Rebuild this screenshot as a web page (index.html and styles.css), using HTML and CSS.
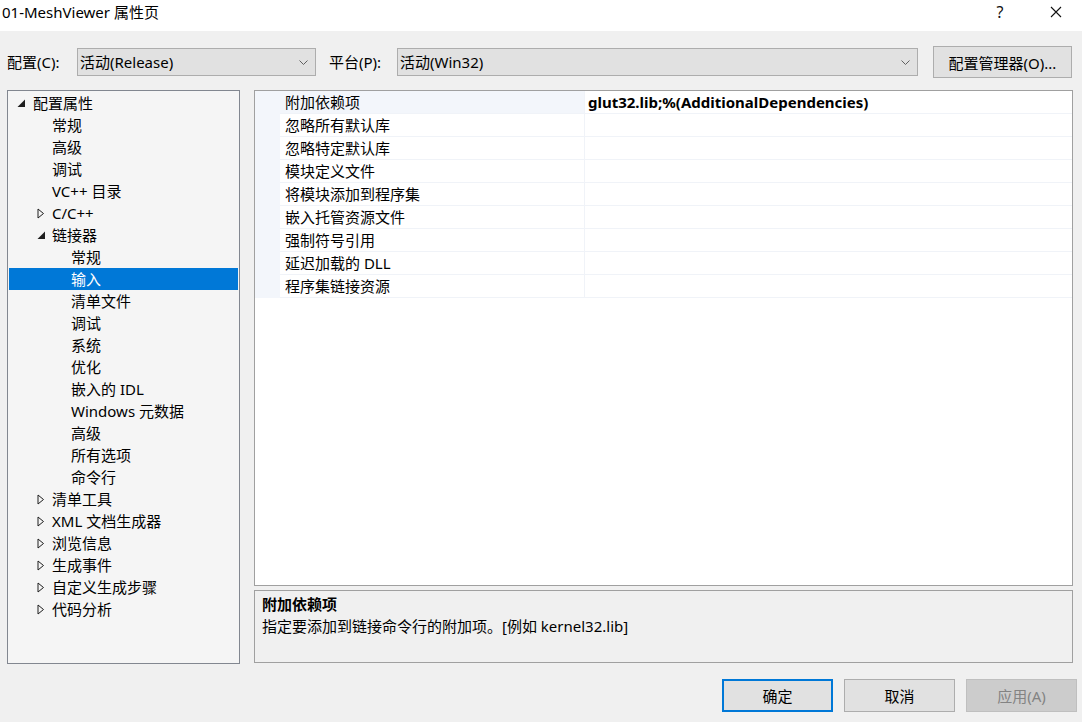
FILE: index.html
```html
<!DOCTYPE html>
<html lang="zh-CN">
<head>
<meta charset="utf-8">
<title>01-MeshViewer 属性页</title>
<link rel="stylesheet" href="styles.css">
</head>
<body>
<div class="window">
  <div class="titlebar">
    <div class="title">01-MeshViewer 属性页</div>
    <div class="winctl">
      <span class="help">?</span>
      <span class="close"><svg width="12" height="12" viewBox="0 0 12 12"><path d="M1 1 L11 11 M11 1 L1 11" stroke="#111" stroke-width="1.1" fill="none"/></svg></span>
    </div>
  </div>

  <div class="toolbar">
    <label class="lbl lbl-config">配置(C):</label>
    <div class="combo combo-config"><span>活动(Release)</span><svg class="chev" width="9" height="5" viewBox="0 0 9 5"><path d="M0.5 0.5 L4.5 4.5 L8.5 0.5" stroke="#606060" fill="none"/></svg></div>
    <label class="lbl lbl-platform">平台(P):</label>
    <div class="combo combo-platform"><span>活动(Win32)</span><svg class="chev" width="9" height="5" viewBox="0 0 9 5"><path d="M0.5 0.5 L4.5 4.5 L8.5 0.5" stroke="#606060" fill="none"/></svg></div>
    <button class="btn btn-mgr">配置管理器(O)...</button>
  </div>

  <div class="main">
    <div class="tree">
      <div class="node l0"><span class="exp"><svg width="9" height="9" viewBox="0 0 9 9"><polygon points="8,0.5 8,8 0.5,8" fill="#1e1e1e"/></svg></span>配置属性</div>
      <div class="node l1n">常规</div>
      <div class="node l1n">高级</div>
      <div class="node l1n">调试</div>
      <div class="node l1n">VC++ 目录</div>
      <div class="node l1"><span class="exp"><svg width="8" height="11" viewBox="0 0 8 11"><polygon points="1,1 6.5,5.5 1,10" fill="none" stroke="#1e1e1e" stroke-width="1"/></svg></span>C/C++</div>
      <div class="node l1"><span class="exp"><svg width="9" height="9" viewBox="0 0 9 9"><polygon points="8,0.5 8,8 0.5,8" fill="#1e1e1e"/></svg></span>链接器</div>
      <div class="node l2">常规</div>
      <div class="node l2 sel">输入</div>
      <div class="node l2">清单文件</div>
      <div class="node l2">调试</div>
      <div class="node l2">系统</div>
      <div class="node l2">优化</div>
      <div class="node l2">嵌入的 IDL</div>
      <div class="node l2">Windows 元数据</div>
      <div class="node l2">高级</div>
      <div class="node l2">所有选项</div>
      <div class="node l2">命令行</div>
      <div class="node l1"><span class="exp"><svg width="8" height="11" viewBox="0 0 8 11"><polygon points="1,1 6.5,5.5 1,10" fill="none" stroke="#1e1e1e" stroke-width="1"/></svg></span>清单工具</div>
      <div class="node l1"><span class="exp"><svg width="8" height="11" viewBox="0 0 8 11"><polygon points="1,1 6.5,5.5 1,10" fill="none" stroke="#1e1e1e" stroke-width="1"/></svg></span>XML 文档生成器</div>
      <div class="node l1"><span class="exp"><svg width="8" height="11" viewBox="0 0 8 11"><polygon points="1,1 6.5,5.5 1,10" fill="none" stroke="#1e1e1e" stroke-width="1"/></svg></span>浏览信息</div>
      <div class="node l1"><span class="exp"><svg width="8" height="11" viewBox="0 0 8 11"><polygon points="1,1 6.5,5.5 1,10" fill="none" stroke="#1e1e1e" stroke-width="1"/></svg></span>生成事件</div>
      <div class="node l1"><span class="exp"><svg width="8" height="11" viewBox="0 0 8 11"><polygon points="1,1 6.5,5.5 1,10" fill="none" stroke="#1e1e1e" stroke-width="1"/></svg></span>自定义生成步骤</div>
      <div class="node l1"><span class="exp"><svg width="8" height="11" viewBox="0 0 8 11"><polygon points="1,1 6.5,5.5 1,10" fill="none" stroke="#1e1e1e" stroke-width="1"/></svg></span>代码分析</div>
    </div>

    <div class="right">
      <div class="grid">
        <div class="prow cur"><div class="strip"></div><div class="pname">附加依赖项</div><div class="pval bold">glut32.lib;%(AdditionalDependencies)</div></div>
        <div class="prow"><div class="strip"></div><div class="pname">忽略所有默认库</div><div class="pval"></div></div>
        <div class="prow"><div class="strip"></div><div class="pname">忽略特定默认库</div><div class="pval"></div></div>
        <div class="prow"><div class="strip"></div><div class="pname">模块定义文件</div><div class="pval"></div></div>
        <div class="prow"><div class="strip"></div><div class="pname">将模块添加到程序集</div><div class="pval"></div></div>
        <div class="prow"><div class="strip"></div><div class="pname">嵌入托管资源文件</div><div class="pval"></div></div>
        <div class="prow"><div class="strip"></div><div class="pname">强制符号引用</div><div class="pval"></div></div>
        <div class="prow"><div class="strip"></div><div class="pname">延迟加载的 DLL</div><div class="pval"></div></div>
        <div class="prow"><div class="strip"></div><div class="pname">程序集链接资源</div><div class="pval"></div></div>
      </div>
      <div class="desc">
        <div class="desc-title">附加依赖项</div>
        <div class="desc-text">指定要添加到链接命令行的附加项。[例如 kernel32.lib]</div>
      </div>
    </div>
  </div>

  <div class="footer">
    <button class="btn btn-ok">确定</button>
    <button class="btn">取消</button>
    <button class="btn btn-disabled">应用(A)</button>
  </div>
</div>
</body>
</html>
```

FILE: styles.css
```css
* { box-sizing: border-box; }
html, body { margin: 0; padding: 0; }
body {
  width: 1082px;
  height: 722px;
  overflow: hidden;
  background: #f0f0f0;
  font-family: "Noto Sans", "Noto Sans CJK SC", sans-serif;
  font-size: 15px;
  color: #000;
}
.window { width: 1082px; height: 722px; display: flex; flex-direction: column; }

.titlebar {
  height: 31px;
  background: #fff;
  display: flex;
  justify-content: space-between;
  align-items: flex-start;
}
.title { padding: 2px 0 0 2px; line-height: 20px; color: #000; }
.winctl { display: flex; align-items: center; height: 24px; padding-right: 20px; }
.help { width: 14px; text-align: center; font-size: 16px; color: #111; margin-right: 43px; line-height: 24px; }
.close { display: flex; align-items: center; }

.toolbar {
  display: flex;
  align-items: center;
  height: 32px;
  margin-top: 15px;
  padding-left: 7px;
}
.lbl { line-height: 20px; color: #000; }
.lbl-config { width: 70px; }
.lbl-platform { width: 68px; margin-left: 13px; }
.combo {
  height: 28px;
  border: 1px solid #adadad;
  background: #e1e1e1;
  display: flex;
  align-items: center;
  justify-content: space-between;
  padding: 0 7px 1px 2px;
}
.combo-config { width: 239px; }
.combo-platform { width: 521px; }
.chev { flex: none; margin-top: 1px; }

.btn {
  font: inherit;
  color: #000;
  background: #e1e1e1;
  border: 1px solid #adadad;
  height: 33px;
  width: 111px;
  padding: 0;
  margin: 0;
}
.btn-mgr { width: 139px; height: 32px; margin-left: 15px; }

.main {
  display: flex;
  margin-top: 12px;
  padding-left: 7px;
  height: 574px;
}
.tree {
  width: 233px;
  height: 574px;
  border: 1px solid #828790;
  background: #f5f5f5;
  padding-top: 1px;
}
.node {
  height: 22px;
  line-height: 22px;
  margin: 0 1px;
  display: flex;
  align-items: center;
  white-space: nowrap;
  color: #000;
}
.node.sel { background: #0078d7; color: #fff; }
.exp { width: 15px; flex: none; display: flex; align-items: center; }
.l0 { padding-left: 8px; }
.l0 .exp { width: 16px; }
.l1 { padding-left: 28px; }
.l1n { padding-left: 43px; }
.l2 { padding-left: 62px; }

.right {
  margin-left: 14px;
  width: 819px;
  display: flex;
  flex-direction: column;
}
.grid {
  height: 496px;
  border: 1px solid #a0a0a0;
  background: #fff;
}
.prow { display: flex; height: 23px; }
.strip { width: 25px; flex: none; background: #f3f6fb; }
.pname {
  width: 305px;
  flex: none;
  padding-left: 5px;
  line-height: 22px;
  border-right: 1px solid #f0f3f8;
  border-bottom: 1px solid #f0f3f8;
  white-space: nowrap;
}
.pval {
  flex: 1;
  padding-left: 3px;
  line-height: 22px;
  border-bottom: 1px solid #f0f3f8;
  white-space: nowrap;
}
.prow.cur .pname { background: #f3f6fb; }
.bold { font-weight: 700; }

.desc {
  margin-top: 4px;
  height: 73px;
  border: 1px solid #a0a0a0;
  background: #f0f0f0;
  padding: 2px 0 0 7px;
}
.desc-title { font-weight: 700; line-height: 22px; }
.desc-text { line-height: 23px; }

.footer {
  display: flex;
  justify-content: flex-end;
  gap: 11px;
  margin-top: 15px;
  padding-right: 5px;
}
.btn-ok { border: 2px solid #0078d7; }
.btn-disabled { background: #cccccc; border-color: #bfbfbf; color: #838383; }
```
